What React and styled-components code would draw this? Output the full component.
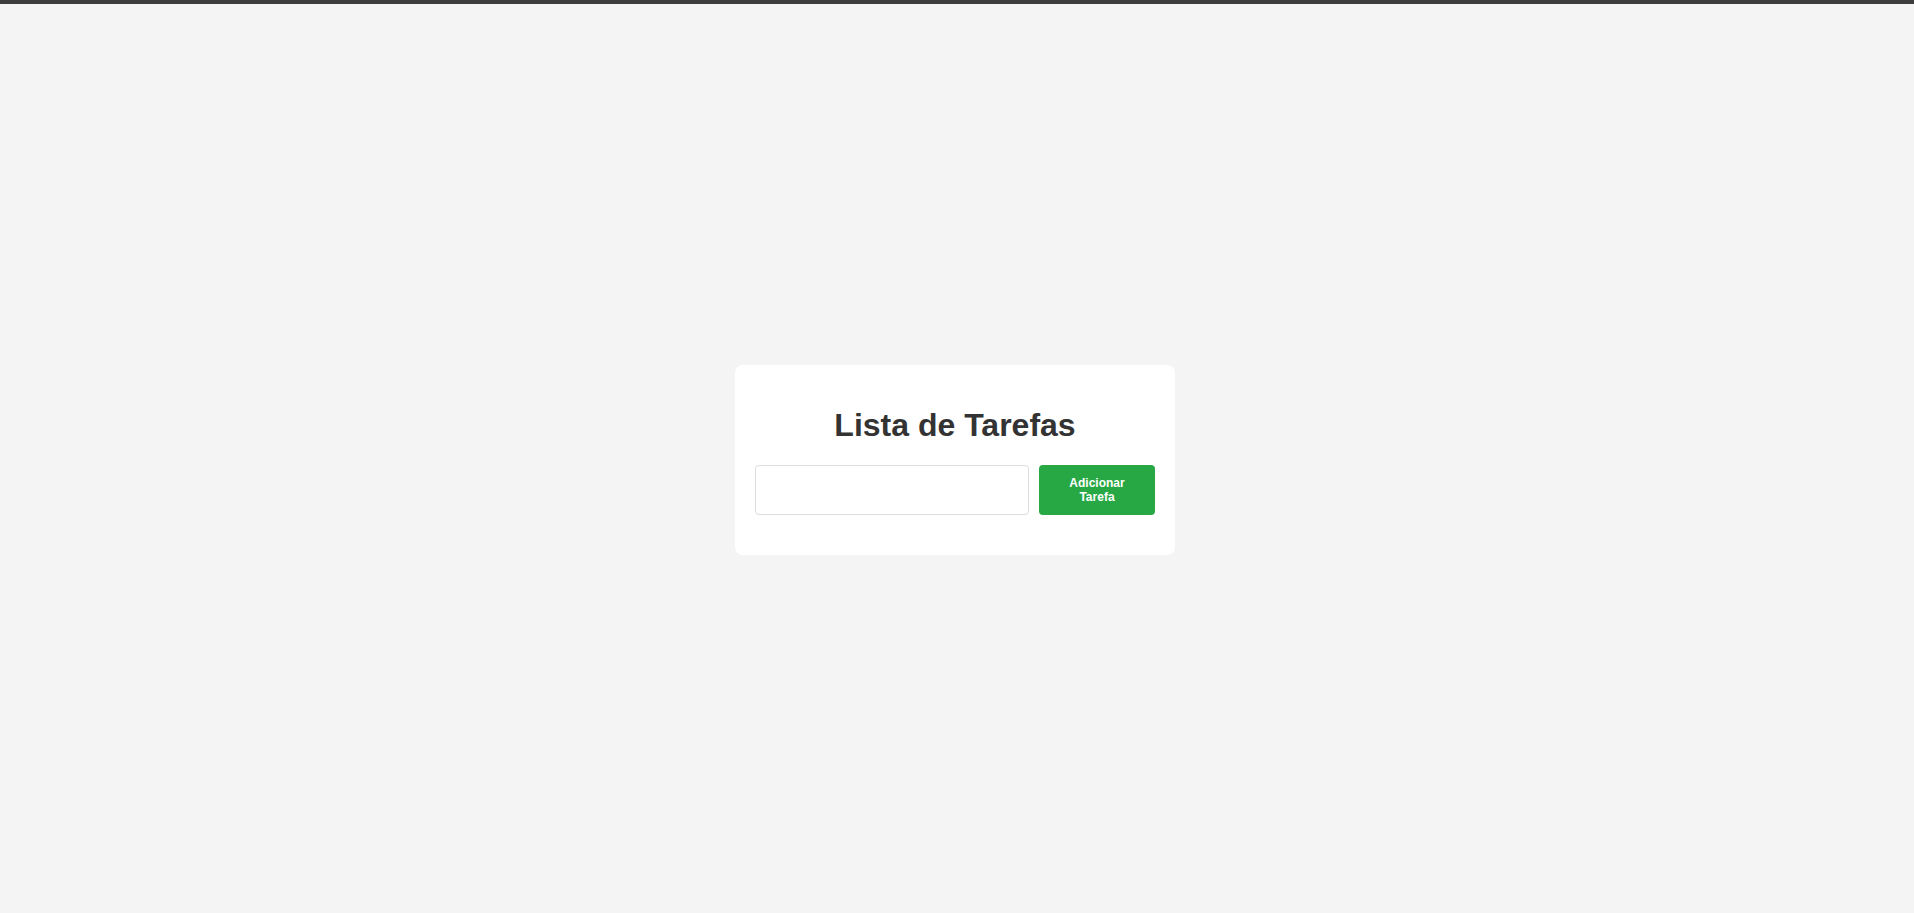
import React, { useState } from 'react';
import styled, { createGlobalStyle } from 'styled-components';

const GlobalStyle = createGlobalStyle`
  html, body {
    margin: 0;
    padding: 0;
    height: 100%;
  }
  body {
    font-family: 'Liberation Sans', Arial, sans-serif;
    background: #f4f4f4;
  }
  #root {
    height: 100%;
  }
`;

const Page = styled.div`
  height: 100vh;
  display: flex;
  flex-direction: column;
`;

const TopBar = styled.div`
  height: 4px;
  background: #3d3d3d;
  flex-shrink: 0;
`;

const Stage = styled.main`
  flex: 1;
  display: flex;
  align-items: center;
  justify-content: center;
  padding: 3px 4px 0 0;
`;

const Card = styled.div`
  width: 440px;
  box-sizing: border-box;
  padding: 20px;
  background: #fff;
  border-radius: 8px;
`;

const Title = styled.h1`
  margin: 21.44px 0;
  font-size: 32px;
  font-weight: bold;
  text-align: center;
  color: #333;
`;

const Form = styled.form`
  display: flex;
  gap: 10px;
  align-items: stretch;
`;

const TaskInput = styled.input`
  flex: 1;
  min-width: 0;
  box-sizing: border-box;
  height: 50px;
  padding: 10px;
  font-size: 16px;
  font-family: inherit;
  border: 1px solid #ddd;
  border-radius: 4px;
  outline: none;
`;

const AddButton = styled.button`
  width: 116px;
  box-sizing: border-box;
  padding: 0 20px;
  background: #28a745;
  color: #fff;
  border: none;
  border-radius: 4px;
  font-family: inherit;
  font-size: 12px;
  font-weight: bold;
  line-height: 14px;
  cursor: pointer;
`;

const TaskList = styled.ul`
  list-style: none;
  margin: 20px 0 0;
  padding: 0;
`;

export default function App() {
  const [text, setText] = useState('');
  const [tasks, setTasks] = useState([]);

  const addTask = (e) => {
    e.preventDefault();
    if (!text.trim()) return;
    setTasks([...tasks, text.trim()]);
    setText('');
  };

  return (
    <>
      <GlobalStyle />
      <Page>
        <TopBar />
        <Stage>
          <Card>
            <Title>Lista de Tarefas</Title>
            <Form onSubmit={addTask}>
              <TaskInput value={text} onChange={(e) => setText(e.target.value)} />
              <AddButton type='submit'>Adicionar Tarefa</AddButton>
            </Form>
            <TaskList>
              {tasks.map((t, i) => (
                <li key={i}>{t}</li>
              ))}
            </TaskList>
          </Card>
        </Stage>
      </Page>
    </>
  );
}
